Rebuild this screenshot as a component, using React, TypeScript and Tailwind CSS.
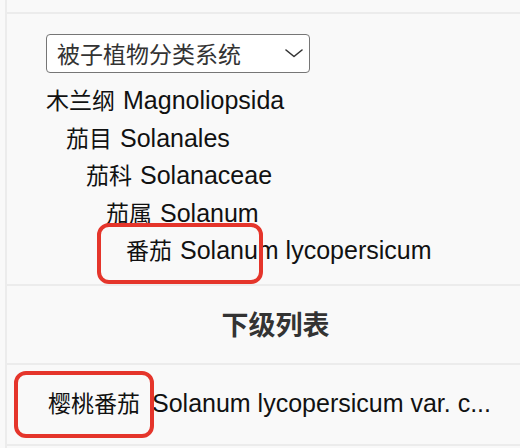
import React from "react";

const cjk = { fontFamily: '"Noto Sans CJK SC", "Noto Sans", sans-serif' };
const lat = { fontFamily: '"Liberation Sans", Arial, sans-serif' };

function Mixed({ zh, la }: { zh: string; la: string }) {
  return (
    <>
      <span className="text-[23px]" style={cjk}>
        {zh}
      </span>
      <span className="text-[25px] pl-[8px]" style={lat}>
        {la}
      </span>
    </>
  );
}

export default function App() {
  const tree = [
    { zh: "木兰纲", la: "Magnoliopsida", indent: "pl-0" },
    { zh: "茄目", la: "Solanales", indent: "pl-[20px]" },
    { zh: "茄科", la: "Solanaceae", indent: "pl-[40px]" },
    { zh: "茄属", la: "Solanum", indent: "pl-[60px]" },
    { zh: "番茄", la: "Solanum lycopersicum", indent: "pl-[80px]" },
  ];
  return (
    <div
      className="relative w-[520px] h-[448px] overflow-hidden bg-[#f9f9f9] text-[#111]"
      style={cjk}
    >
      <div className="ml-[5px] h-full border-l-2 border-[#ececec] flex flex-col">
        <div className="h-[12px] shrink-0" />
        <div className="border-t-2 border-[#ececec] pt-[20px] pb-[15px] pl-[39px]">
          <div className="relative w-[264px] h-[39px]">
            <select
              className="appearance-none w-full h-full rounded-[4px] border border-[#767676] bg-white pl-[10px] text-[23px] text-[#333] outline-none"
              style={cjk}
              defaultValue="a"
            >
              <option value="a">被子植物分类系统</option>
            </select>
            <svg
              className="pointer-events-none absolute left-[239px] top-[15px]"
              width="18"
              height="9"
              viewBox="0 0 18 9"
              fill="none"
            >
              <path d="M1 1 L9 7.5 L17 1" stroke="#333" strokeWidth="1.6" strokeLinecap="round" strokeLinejoin="round" />
            </svg>
          </div>
          <div className="mt-[8px] leading-[37.5px]">
            {tree.map((t) => (
              <div key={t.zh} className={t.indent + " whitespace-nowrap h-[37.5px]"}>
                <Mixed zh={t.zh} la={t.la} />
              </div>
            ))}
          </div>
        </div>
        <div className="border-t-2 border-[#ececec] h-[79px] flex items-center justify-center pl-[24px]">
          <span className="text-[27px] font-bold text-[#333]" style={cjk}>
            下级列表
          </span>
        </div>
        <div className="border-t-2 border-[#ececec] h-[81px] flex items-center pl-[41px]">
          <span className="whitespace-nowrap">
            <span className="text-[23px]" style={cjk}>
              樱桃番茄
            </span>
            <span className="text-[25px] pl-[12px]" style={lat}>
              Solanum lycopersicum var. c...
            </span>
          </span>
        </div>
        <div className="border-t-2 border-[#ececec] flex-1" />
      </div>

      <div className="pointer-events-none absolute left-[97px] top-[223px] w-[166px] h-[61px] rounded-[12px] border-[4px] border-[#e5352b]" />
      <div className="pointer-events-none absolute left-[14px] top-[371px] w-[140px] h-[67px] rounded-[12px] border-[4px] border-[#e5352b]" />
    </div>
  );
}
